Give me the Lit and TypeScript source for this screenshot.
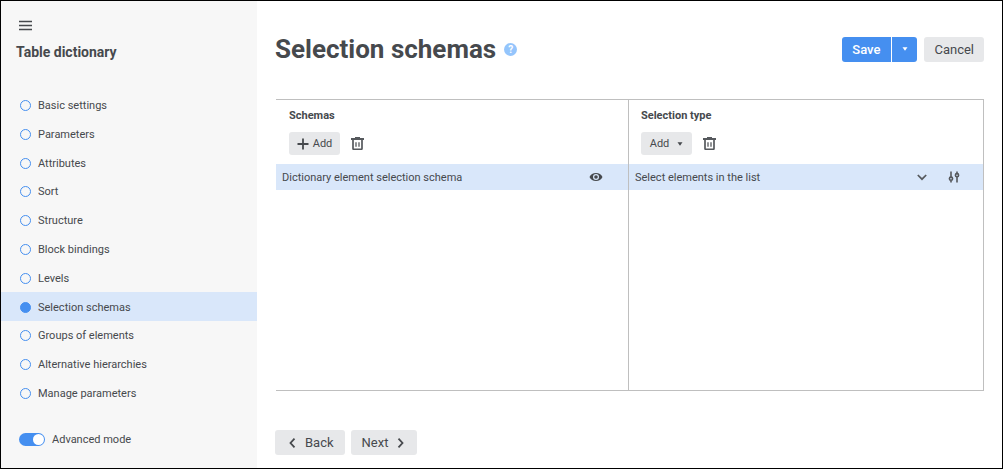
import { LitElement, html, css, svg } from "lit";
import { customElement, state } from "lit/decorators.js";
import { classMap } from "lit/directives/class-map.js";

const trashIcon = html`<svg width="13" height="13" viewBox="0 0 13 13" fill="none" stroke="#56595d">
  <path d="M0 2h13" stroke-width="2" />
  <path d="M4 .5h5" stroke-width="1" />
  <path d="M2 2.500v9a.8.8 0 0 0 .8.8h7.400a.8.8 0 0 0 .8-.8v-9" stroke-width="1.700" />
  <path d="M5 5.200v4.500M8 5.200v4.500" stroke-width="1.300" />
</svg>`;

const plusIcon = html`<svg width="12" height="12" viewBox="0 0 12 12" stroke="currentColor" stroke-width="1.800">
  <path d="M6 .5v11M.5 6h11" />
</svg>`;

const eyeIcon = html`<svg width="14" height="10" viewBox="0 0 14 10">
  <path fill="currentColor" fill-rule="evenodd" d="M7 1C4 1 1.700 2.500.5 5 1.700 7.500 4 9 7 9S12.300 7.500 13.500 5C12.300 2.500 10 1 7 1ZM7 2a3 3 0 1 1 0 6a3 3 0 0 1 0-6Z" />
  <circle cx="7" cy="5" r="1.800" fill="currentColor" />
</svg>`;

const chevronDown = html`<svg width="10" height="7" viewBox="0 0 10 7" fill="none" stroke="#56595d" stroke-width="1.700">
  <path d="M.8 1 5 5.200 9.200 1" />
</svg>`;

const slidersIcon = html`<svg width="12" height="12" viewBox="0 0 12 12" fill="none" stroke="#56595d" stroke-width="1.600">
  <path d="M3 .5v5.500M3 9.500v2M9 .5v1.500M9 6v5.500" />
  <circle cx="3" cy="7.700" r="1.600" />
  <circle cx="9" cy="4.200" r="1.600" />
</svg>`;

const caret = html`<svg width="6" height="4" viewBox="0 0 6 4"><path d="M.5.3h5L3 3.700Z" fill="currentColor" /></svg>`;

const chevron = (d: string) => html`<svg width="7" height="10" viewBox="0 0 7 10" fill="none" stroke="currentColor" stroke-width="1.800">
  ${svg`<path d=${d} />`}
</svg>`;

const STEPS = [
  "Basic settings",
  "Parameters",
  "Attributes",
  "Sort",
  "Structure",
  "Block bindings",
  "Levels",
  "Selection schemas",
  "Groups of elements",
  "Alternative hierarchies",
  "Manage parameters",
];

@customElement("app-root")
export class AppRoot extends LitElement {
  @state() private current = 7;

  static styles = css`
    :host {
      display: grid;
      grid-template-columns: 256px minmax(0, 1fr);
      box-sizing: border-box;
      min-height: 100vh;
      border: 1px solid #000;
      background: #fff;
      color: #46494d;
      font: 11px/17px Roboto, "Liberation Sans", sans-serif;
    }
    *,
    *::before {
      box-sizing: border-box;
    }
    svg {
      display: block;
      flex: none;
    }
    button {
      display: inline-flex;
      align-items: center;
      justify-content: center;
      border: 0;
      border-radius: 3px;
      margin: 0;
      padding: 0;
      background: none;
      color: inherit;
      font: inherit;
      cursor: pointer;
    }
    .sidebar {
      display: flex;
      flex-direction: column;
      background: #f7f7f7;
      padding-bottom: 20px;
    }
    .burger {
      width: 13px;
      height: 11px;
      margin: 19px 0 0 18px;
    }
    .sidebar-title {
      margin: 11px 15px 0;
      font-size: 14px;
      line-height: 20px;
      font-weight: 700;
    }
    .steps {
      display: grid;
      grid-auto-rows: 1fr;
      height: 317px;
      margin: 28px 0 0;
      padding: 0;
      list-style: none;
    }
    .step {
      display: flex;
      align-items: center;
      gap: 7px;
      height: 100%;
      padding: 2px 0 0 19px;
      color: inherit;
      text-decoration: none;
    }
    .step::before {
      content: "";
      width: 11px;
      height: 11px;
      border: 1px solid #458ff0;
      border-radius: 50%;
    }
    .step.active {
      background: #d9e7fa;
    }
    .step.active::before {
      background: #458ff0;
    }
    .mode {
      display: flex;
      align-items: center;
      gap: 7px;
      margin: 24px 0 0 18px;
    }
    .switch {
      appearance: none;
      display: flex;
      width: 26px;
      height: 13px;
      margin: 0;
      padding: 1px;
      border-radius: 7px;
      background: #b5b8bb;
    }
    .switch::before {
      content: "";
      width: 11px;
      height: 11px;
      border-radius: 50%;
      background: #fff;
    }
    .switch:checked {
      justify-content: flex-end;
      background: #458ff0;
    }
    .main {
      display: flex;
      flex-direction: column;
      padding: 32px 18px 13px 18px;
    }
    .head {
      display: flex;
      align-items: center;
      height: 32px;
    }
    .title {
      margin: 0;
      font-size: 26px;
      line-height: 32px;
      font-weight: 700;
    }
    .help {
      width: 13px;
      height: 13px;
      margin-left: 8px;
      border-radius: 50%;
      background: #94c5fc;
      color: #fff;
      font-size: 10px;
      line-height: 13px;
      font-weight: 700;
    }
    .actions {
      display: flex;
      margin-left: auto;
      font-size: 13px;
    }
    .primary {
      height: 25px;
      background: #458ff0;
      color: #fff;
      font-weight: 500;
    }
    .save {
      padding: 0 11px 0 10px;
      border-radius: 3px 0 0 3px;
    }
    .more {
      width: 25px;
      margin-left: 1px;
      border-radius: 0 3px 3px 0;
    }
    .secondary {
      height: 25px;
      background: #e7e8ea;
    }
    .cancel {
      margin-left: 7px;
      padding: 0 10px;
    }
    .panels {
      display: grid;
      grid-template-columns: 352px minmax(0, 1fr);
      flex: 1;
      margin: 34px 0 0 1px;
      border: 1px solid #bfbfbf;
      border-left: 0;
    }
    .panel + .panel {
      border-left: 1px solid #bfbfbf;
    }
    .panel-title {
      margin: 7px 13px 0;
      font-size: 11px;
      line-height: 17px;
      font-weight: 700;
    }
    .tools {
      display: flex;
      align-items: center;
      gap: 11px;
      margin: 8px 12px 9px 13px;
    }
    .panel + .panel .tools,
    .panel + .panel .panel-title {
      margin-left: 12px;
    }
    .add {
      width: 51px;
      height: 23px;
      gap: 4px;
    }
    .add.menu {
      gap: 8px;
    }
    .row {
      display: flex;
      align-items: center;
      height: 26px;
      padding: 0 23px 0 6px;
      background: #d9e7fa;
    }
    .row-text {
      flex: 1;
    }
    .eye {
      padding: 0 2px;
    }
    .row-icons {
      display: flex;
      gap: 21px;
    }
    .nav {
      display: flex;
      gap: 6px;
      margin-top: 39px;
      font-size: 13px;
    }
    .nav-button {
      gap: 9px;
      padding: 0 11px 0 14px;
    }
    .nav-button.next {
      padding: 0 13px 0 11px;
    }
  `;

  private select(event: Event, index: number) {
    event.preventDefault();
    this.current = index;
  }

  render() {
    return html`
      <nav class="sidebar">
        <button class="burger" aria-label="Menu">
          <svg width="13" height="11" viewBox="0 0 13 11" stroke="currentColor" stroke-width="1.700">
            <path d="M0 1.500h13M0 5.500h13M0 9.500h13" />
          </svg>
        </button>
        <h2 class="sidebar-title">Table dictionary</h2>
        <ul class="steps">
          ${STEPS.map(
            (name, i) => html`<li>
              <a
                href="#"
                class=${classMap({ step: true, active: i === this.current })}
                @click=${(e: Event) => this.select(e, i)}
                >${name}</a
              >
            </li>`
          )}
        </ul>
        <label class="mode"><input class="switch" type="checkbox" role="switch" checked />Advanced mode</label>
      </nav>
      <main class="main">
        <header class="head">
          <h1 class="title">Selection schemas</h1>
          <button class="help" aria-label="Help">?</button>
          <div class="actions">
            <button class="primary save">Save</button>
            <button class="primary more" aria-label="More save options">${caret}</button>
            <button class="secondary cancel">Cancel</button>
          </div>
        </header>
        <div class="panels">
          <section class="panel">
            <h3 class="panel-title">Schemas</h3>
            <div class="tools">
              <button class="secondary add">${plusIcon}Add</button>
              <button aria-label="Delete schema">${trashIcon}</button>
            </div>
            <div class="row">
              <span class="row-text">Dictionary element selection schema</span>
              <button class="eye" aria-label="Preview">${eyeIcon}</button>
            </div>
          </section>
          <section class="panel">
            <h3 class="panel-title">Selection type</h3>
            <div class="tools">
              <button class="secondary add menu">Add${caret}</button>
              <button aria-label="Delete selection type">${trashIcon}</button>
            </div>
            <div class="row">
              <span class="row-text">Select elements in the list</span>
              <div class="row-icons">
                <button aria-label="Choose type">${chevronDown}</button>
                <button aria-label="Type settings">${slidersIcon}</button>
              </div>
            </div>
          </section>
        </div>
        <footer class="nav">
          <button class="secondary nav-button">${chevron("M5.500.7 1.500 5l4 4.300")}Back</button>
          <button class="secondary nav-button next">Next${chevron("M1.500.7 5.500 5l-4 4.300")}</button>
        </footer>
      </main>
    `;
  }
}
